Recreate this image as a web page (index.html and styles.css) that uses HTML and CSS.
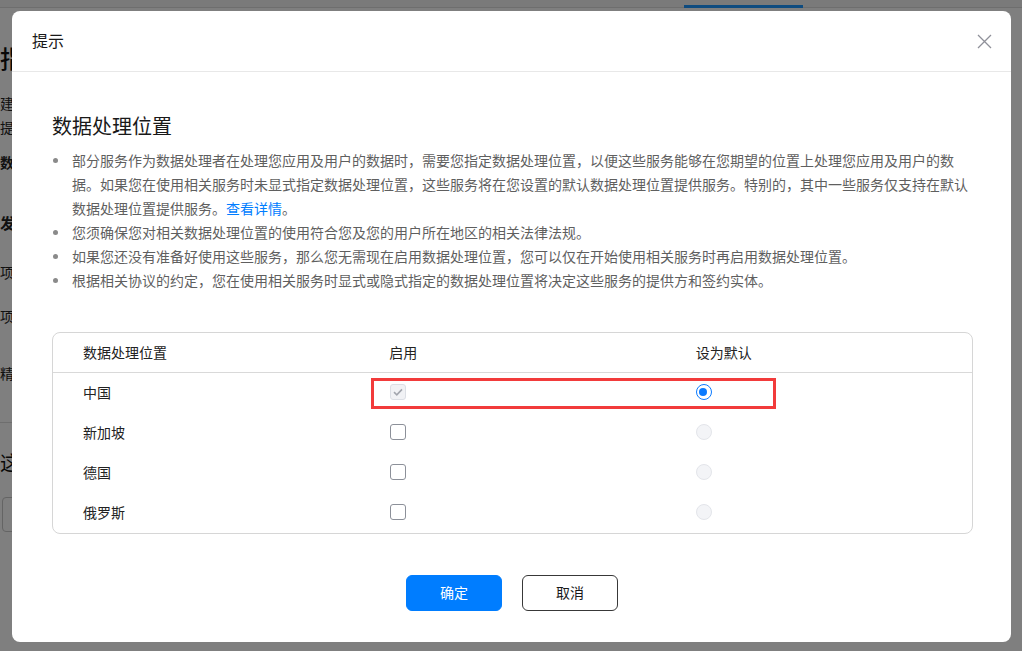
FILE: index.html
```html
<!DOCTYPE html>
<html lang="zh-CN">
<head>
<meta charset="utf-8">
<title>提示</title>
<link rel="stylesheet" href="styles.css">
</head>
<body>
<div class="page">
  <div class="topbar"><span class="tab-active"></span></div>
  <div class="page-body">
    <h1 class="page-title">指定</h1>
    <p class="page-line">建议</p>
    <p class="page-line">提示</p>
    <p class="page-line bold">数据</p>
    <p class="page-line bold big gap-a">发布</p>
    <p class="page-line gap-b">项目</p>
    <p class="page-line gap-c">项目</p>
    <p class="page-line gap-d">精准</p>
    <div class="page-rule"></div>
    <p class="page-sub">这是</p>
    <div class="page-input"></div>
  </div>
</div>

<div class="mask"></div>

<div class="modal">
  <div class="modal-header">
    <span class="modal-title">提示</span>
    <svg class="close" width="15" height="15" viewBox="0 0 15 15"><path d="M1 1 L14 14 M14 1 L1 14" stroke="#8f9099" stroke-width="1.3" fill="none"/></svg>
  </div>
  <div class="modal-body">
    <h2 class="heading">数据处理位置</h2>
    <ul class="notes">
      <li>部分服务作为数据处理者在处理您应用及用户的数据时，需要您指定数据处理位置，以便这些服务能够在您期望的位置上处理您应用及用户的数据。如果您在使用相关服务时未显式指定数据处理位置，这些服务将在您设置的默认数据处理位置提供服务。特别的，其中一些服务仅支持在默认数据处理位置提供服务。<a class="link">查看详情</a>。</li>
      <li>您须确保您对相关数据处理位置的使用符合您及您的用户所在地区的相关法律法规。</li>
      <li>如果您还没有准备好使用这些服务，那么您无需现在启用数据处理位置，您可以仅在开始使用相关服务时再启用数据处理位置。</li>
      <li>根据相关协议的约定，您在使用相关服务时显式或隐式指定的数据处理位置将决定这些服务的提供方和签约实体。</li>
    </ul>

    <div class="table">
      <div class="row head">
        <div class="cell">数据处理位置</div>
        <div class="cell">启用</div>
        <div class="cell">设为默认</div>
      </div>
      <div class="row">
        <div class="cell">中国</div>
        <div class="cell"><span class="cb cb-disabled-checked"><svg width="12" height="12" viewBox="0 0 12 12"><path d="M2 6.2 L4.8 8.8 L10 3.4" stroke="#a3a6ae" stroke-width="1.6" fill="none"/></svg></span></div>
        <div class="cell"><span class="radio radio-on"></span></div>
      </div>
      <div class="row">
        <div class="cell">新加坡</div>
        <div class="cell"><span class="cb"></span></div>
        <div class="cell"><span class="radio radio-disabled"></span></div>
      </div>
      <div class="row">
        <div class="cell">德国</div>
        <div class="cell"><span class="cb"></span></div>
        <div class="cell"><span class="radio radio-disabled"></span></div>
      </div>
      <div class="row">
        <div class="cell">俄罗斯</div>
        <div class="cell"><span class="cb"></span></div>
        <div class="cell"><span class="radio radio-disabled"></span></div>
      </div>
      <div class="highlight"></div>
    </div>

    <div class="footer">
      <button class="btn btn-primary">确定</button>
      <button class="btn btn-default">取消</button>
    </div>
  </div>
</div>
</body>
</html>
```

FILE: styles.css
```css
* { box-sizing: border-box; }
html, body { margin: 0; padding: 0; }
body {
  width: 1022px;
  height: 651px;
  overflow: hidden;
  background: #fff;
  font-family: "Noto Sans CJK SC", "Noto Sans", sans-serif;
  color: #191919;
}

/* background page */
.page { width: 1022px; height: 651px; }
.topbar {
  height: 8px;
  background: #f4f4f4;
  border-bottom: 1px solid #dcdcdc;
  position: relative;
}
.tab-active {
  position: absolute;
  left: 684px;
  top: 5px;
  width: 119px;
  height: 3px;
  background: #1d96ff;
}
.page-body { width: 12px; overflow: hidden; white-space: nowrap; }
.page-title {
  margin: 34px 0 0 0;
  font-size: 24px;
  line-height: 32px;
  font-weight: 500;
  color: #111;
}
.page-line {
  margin: 0;
  font-size: 14px;
  line-height: 24px;
  color: #222;
}
.page-title + .page-line { margin-top: 17px; }
.page-line.bold { font-weight: 700; margin-top: 11px; }
.page-line.big { font-size: 15px; }
.gap-a { margin-top: 37px !important; }
.gap-b { margin-top: 25px; }
.gap-c { margin-top: 20px; }
.gap-d { margin-top: 33px; }
.page-rule { margin-top: 37px; height: 1px; background: #dcdcdc; }
.page-sub {
  margin: 26px 0 0 0;
  font-size: 20px;
  line-height: 28px;
  color: #111;
}
.page-input {
  margin: 20px 0 0 2px;
  width: 300px;
  height: 35px;
  border: 1px solid #c8c8c8;
  border-radius: 4px;
}

/* overlay */
.mask {
  position: fixed;
  inset: 0;
  background: rgba(0, 0, 0, 0.5);
}

.modal {
  position: absolute;
  left: 12px;
  top: 11px;
  width: 999px;
  background: #fff;
  border-radius: 8px;
}
.modal-header {
  height: 61px;
  border-bottom: 1px solid #e8e8e8;
  display: flex;
  align-items: center;
  justify-content: space-between;
  padding: 0 19px 0 20px;
}
.modal-title {
  font-size: 16px;
  line-height: 24px;
  color: #191919;
  margin-bottom: 2px;
}
.close { display: block; margin-top: 1px; }

.modal-body { padding: 40px 38px 31px 40px; }
.heading {
  margin: 0;
  font-size: 20px;
  line-height: 28px;
  font-weight: 400;
  color: #191919;
}
.notes {
  margin: 8px 0 0 0;
  padding: 0 0 0 20px;
  list-style: none;
}
.notes li {
  position: relative;
  font-size: 14px;
  line-height: 24px;
  color: #5f5f5f;
}
.notes li::before {
  content: "";
  position: absolute;
  left: -19px;
  top: 10px;
  width: 5px;
  height: 5px;
  border-radius: 50%;
  background: #8a8a8a;
}
.link { color: #007dff; text-decoration: none; }

.table {
  position: relative;
  margin-top: 40px;
  border: 1px solid #d6d6d6;
  border-radius: 8px;
}
.row {
  display: grid;
  grid-template-columns: 1fr 1fr 1fr;
  height: 40px;
}
.row.head { height: 40px; border-bottom: 1px solid #d9d9d9; }
.cell {
  display: flex;
  align-items: center;
  padding: 0 0 3px 30px;
  font-size: 14px;
  color: #222;
}
.row.head .cell { color: #222; padding-bottom: 2px; }

.cb {
  display: flex;
  align-items: center;
  justify-content: center;
  width: 16px;
  height: 16px;
  border: 1px solid #8c9099;
  border-radius: 3px;
  background: #fff;
  margin-left: 1px;
  margin-top: 1px;
}
.cb-disabled-checked {
  background: #f1f2f5;
  border-color: #dcdfe5;
}
.radio {
  display: block;
  width: 16px;
  height: 16px;
  border-radius: 50%;
  margin-left: 0;
  margin-top: 1px;
}
.radio-on {
  border: 1.5px solid #0a7aff;
  background: #fff;
  position: relative;
}
.radio-on::after {
  content: "";
  position: absolute;
  left: 2.5px;
  top: 2.5px;
  width: 8px;
  height: 8px;
  border-radius: 50%;
  background: #0a7aff;
}
.radio-disabled {
  background: #f3f4f7;
  border: 1px solid #e3e5ea;
}

.highlight {
  position: absolute;
  left: 318px;
  top: 45px;
  width: 405px;
  height: 31px;
  border: 3px solid #f23b3b;
  pointer-events: none;
}

.footer {
  margin-top: 41px;
  display: flex;
  justify-content: center;
  gap: 20px;
  margin-left: -1px;
}
.btn {
  width: 96px;
  height: 36px;
  border-radius: 6px;
  font-family: "Noto Sans CJK SC", sans-serif;
  font-size: 14px;
  padding: 0 0 3px 0;
  cursor: pointer;
}
.btn-primary {
  background: #007dff;
  border: 1px solid #007dff;
  color: #fff;
}
.btn-default {
  background: #fff;
  border: 1px solid #383838;
  color: #191919;
}
```
